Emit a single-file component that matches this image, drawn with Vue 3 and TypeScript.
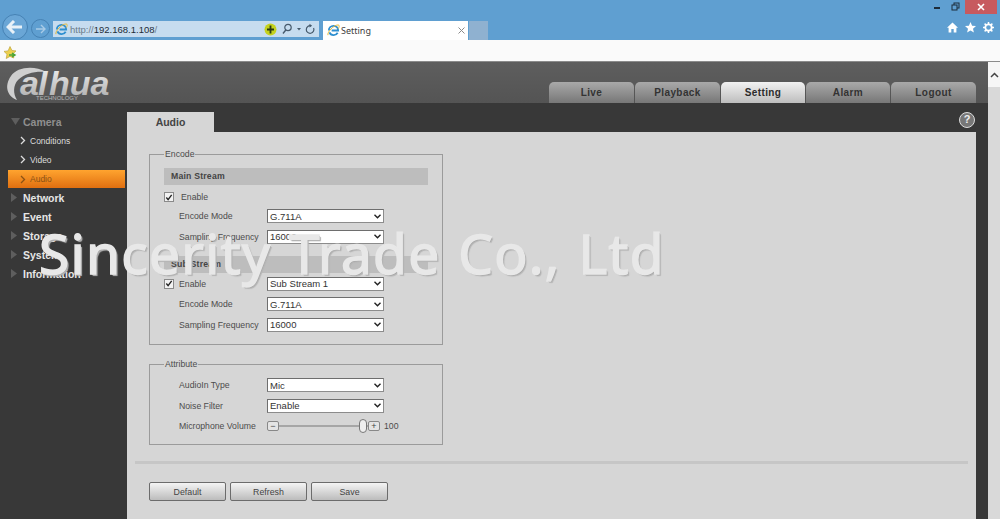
<script setup lang="ts">
const navTabs = [
  { label: 'Live', width: 85 },
  { label: 'Playback', width: 85 },
  { label: 'Setting', width: 84, active: true },
  { label: 'Alarm', width: 84 },
  { label: 'Logout', width: 85 },
];

const cameraItems = [
  { label: 'Conditions' },
  { label: 'Video' },
  { label: 'Audio', active: true },
];

const menuItems = ['Network', 'Event', 'Storage', 'System', 'Information'];

const streams = [
  {
    title: 'Main Stream',
    rows: [
      { label: 'Encode Mode', value: 'G.711A' },
      { label: 'Sampling Frequency', value: '16000' },
    ],
  },
  {
    title: 'Sub Stream',
    sub: true,
    rows: [
      { label: 'Encode Mode', value: 'G.711A' },
      { label: 'Sampling Frequency', value: '16000' },
    ],
  },
];

const attributes = [
  { label: 'AudioIn Type', value: 'Mic' },
  { label: 'Noise Filter', value: 'Enable' },
];

const buttons = ['Default', 'Refresh', 'Save'];
</script>

<template>
  <div class="page">
    <!-- browser chrome -->
    <div class="titlebar">
      <div class="window-btns">
        <svg class="win-icon" width="26" height="14" viewBox="0 0 26 14">
          <rect x="0" y="7" width="6" height="2" fill="#1d2c3a" />
          <rect x="20" y="3" width="5" height="5" fill="none" stroke="#1d2c3a" stroke-width="1" />
          <rect x="18" y="5" width="5" height="5" fill="#5f9fd1" stroke="#1d2c3a" stroke-width="1" />
        </svg>
        <div class="win-close">
          <svg width="8" height="8" viewBox="0 0 8 8"><path d="M1 1l6 6M7 1l-6 6" stroke="#fff" stroke-width="1.6" /></svg>
        </div>
      </div>
      <div class="toolbar">
        <div class="nav-btn back">
          <svg width="18" height="14" viewBox="0 0 18 14"><path d="M8 1L2 7l6 6M2 7h14" fill="none" stroke="#e8f1f8" stroke-width="3" /></svg>
        </div>
        <div class="nav-btn forward">
          <svg width="11" height="10" viewBox="0 0 11 10"><path d="M6 1l4 4-4 4M10 5H1" fill="none" stroke="#a9cbe6" stroke-width="1.4" /></svg>
        </div>
        <div class="address">
          <svg class="ie" width="13" height="13" viewBox="0 0 14 14">
            <path d="M2 7a5 5 0 0 1 10 0H5M11.5 9.5A5 5 0 0 1 2.6 9" fill="none" stroke="#2f8fd0" stroke-width="2" />
            <path d="M1 12C0 9 7 1 12 1c2 0 1 3 0 4" fill="none" stroke="#e8b92c" stroke-width="1" />
          </svg>
          <span class="url"><i>http://</i>192.168.1.108<i>/</i></span>
          <svg class="guard" width="13" height="13" viewBox="0 0 13 13">
            <circle cx="6.5" cy="6.5" r="6" fill="#c4d21f" />
            <path d="M6.5 2.5v8M3 6.5h7" stroke="#2c3a12" stroke-width="1.8" />
          </svg>
          <svg class="addr-tools" width="38" height="12" viewBox="0 0 38 12">
            <circle cx="7" cy="4.5" r="3.2" fill="none" stroke="#465a6c" stroke-width="1.2" />
            <path d="M4.8 7L2 10.5" stroke="#465a6c" stroke-width="1.4" />
            <path d="M16 5h4l-2 2.4z" fill="#465a6c" />
            <path d="M30 2.800a3.800 3.800 0 1 0 2.600 2.200" fill="none" stroke="#465a6c" stroke-width="1.2" />
            <path d="M28.500 .8l2.600 2-2.600 1.600z" fill="#465a6c" />
          </svg>
        </div>
        <div class="browser-tab">
          <svg class="ie" width="13" height="13" viewBox="0 0 14 14">
            <path d="M2 7a5 5 0 0 1 10 0H5M11.5 9.5A5 5 0 0 1 2.6 9" fill="none" stroke="#2f8fd0" stroke-width="2" />
            <path d="M1 12C0 9 7 1 12 1c2 0 1 3 0 4" fill="none" stroke="#e8b92c" stroke-width="1" />
          </svg>
          <span class="tab-title">Setting</span>
          <svg width="7" height="7" viewBox="0 0 7 7"><path d="M.5.5l6 6M6.5.5l-6 6" stroke="#8a8a8a" stroke-width="1" /></svg>
        </div>
        <div class="new-tab"></div>
        <div class="tool-icons">
          <svg width="11" height="11" viewBox="0 0 11 11"><path d="M5.500 .5L11 5.800H9.400V10.500H6.700V7H4.300V10.500H1.600V5.800H0z" fill="#fff" /></svg>
          <svg width="11" height="11" viewBox="0 0 11 11"><path d="M5.500 0l1.600 3.700 3.900.4-3 2.600.9 3.900-3.400-2-3.400 2 .9-3.900-3-2.600 3.900-.4z" fill="#fff" /></svg>
          <svg width="11" height="11" viewBox="0 0 11 11">
            <circle cx="5.500" cy="5.500" r="3.200" fill="none" stroke="#fff" stroke-width="1.800" />
            <path d="M5.500 0v2M5.500 9v2M0 5.500h2M9 5.500h2M1.600 1.600l1.400 1.400M8 8l1.400 1.400M9.400 1.600L8 3M3 8L1.600 9.400" stroke="#fff" stroke-width="1.500" />
          </svg>
        </div>
      </div>
    </div>
    <div class="favbar">
      <svg width="14" height="13" viewBox="0 0 14 13">
        <path d="M7 .5l1.900 3.900 4.100.5-3 2.900.8 4.200L7 10.400l-3.800 2.100.8-4.200-3-2.900 4.100-.5z" fill="#edd04e" stroke="#b79a2a" stroke-width=".6" />
        <path d="M6 9h5M9 7l3 2-3 2" fill="none" stroke="#4aa538" stroke-width="1.500" />
      </svg>
    </div>

    <!-- device web ui -->
    <div class="viewport">
      <div class="app">
        <header class="header">
          <svg class="logo" width="112" height="41" viewBox="0 0 112 41">
            <defs>
              <linearGradient id="logoFill" x1="0" y1="0" x2="0" y2="1">
                <stop offset="0" stop-color="#f4f4f4" />
                <stop offset="1" stop-color="#a8a8a8" />
              </linearGradient>
            </defs>
            <path d="M42 10C30 3 13 5 7 14 0 24 3 34 13 38 9 32 9 23 14 18 21 11 32 9 42 10z" fill="#cfcfcf" />
            <text x="16" y="33" class="logo-text" fill="url(#logoFill)">a</text>
            <text x="34" y="33" class="logo-text" fill="url(#logoFill)">l</text>
            <text x="45" y="33" class="logo-text" fill="url(#logoFill)">hua</text>
            <text x="32" y="37.500" class="logo-sub">TECHNOLOGY</text>
          </svg>
          <nav class="nav-tabs">
            <div
              v-for="tab in navTabs"
              :key="tab.label"
              class="nav-tab"
              :class="{ active: tab.active }"
              :style="{ width: tab.width + 'px' }"
            >{{ tab.label }}</div>
          </nav>
        </header>

        <div class="body">
          <aside class="sidebar">
            <div class="menu-row dim">
              <svg class="caret-down" width="9" height="7" viewBox="0 0 9 7"><path d="M0 0h9L4.500 7z" fill="#5e5e5e" /></svg>
              <span>Camera</span>
            </div>
            <div
              v-for="item in cameraItems"
              :key="item.label"
              class="sub-row"
              :class="{ active: item.active }"
            >
              <svg width="6" height="9" viewBox="0 0 6 9"><path d="M1 1l3.500 3.500L1 8" fill="none" stroke="currentColor" stroke-width="1.300" /></svg>
              <span>{{ item.label }}</span>
            </div>
            <div v-for="item in menuItems" :key="item" class="menu-row">
              <svg class="caret" width="6" height="9" viewBox="0 0 6 9"><path d="M0 0l6 4.500L0 9z" fill="#5e5e5e" /></svg>
              <span>{{ item }}</span>
            </div>
          </aside>

          <main class="main">
            <div class="tabstrip">
              <div class="page-tab">Audio</div>
              <div class="help">?</div>
            </div>
            <div class="panel">
              <fieldset class="group encode">
                <legend>Encode</legend>
                <section v-for="stream in streams" :key="stream.title" class="stream">
                  <div class="stream-title">{{ stream.title }}</div>
                  <div class="row enable" :class="{ sub: stream.sub }">
                    <span class="check">
                      <svg width="9" height="9" viewBox="0 0 9 9"><path d="M1.500 4.500l2 2.500 4-5.500" fill="none" stroke="#222" stroke-width="1.500" /></svg>
                    </span>
                    <span class="enable-label">Enable</span>
                    <div v-if="stream.sub" class="select enable-select">
                      <span>Sub Stream 1</span>
                      <svg width="7" height="5" viewBox="0 0 7 5"><path d="M.5 .8l3 3 3-3" fill="none" stroke="#222" stroke-width="1.400" /></svg>
                    </div>
                  </div>
                  <div v-for="row in stream.rows" :key="row.label" class="row">
                    <label>{{ row.label }}</label>
                    <div class="select">
                      <span>{{ row.value }}</span>
                      <svg width="7" height="5" viewBox="0 0 7 5"><path d="M.5 .8l3 3 3-3" fill="none" stroke="#222" stroke-width="1.400" /></svg>
                    </div>
                  </div>
                </section>
              </fieldset>

              <fieldset class="group attribute">
                <legend>Attribute</legend>
                <div v-for="row in attributes" :key="row.label" class="row">
                  <label>{{ row.label }}</label>
                  <div class="select">
                    <span>{{ row.value }}</span>
                    <svg width="7" height="5" viewBox="0 0 7 5"><path d="M.5 .8l3 3 3-3" fill="none" stroke="#222" stroke-width="1.400" /></svg>
                  </div>
                </div>
                <div class="row">
                  <label>Microphone Volume</label>
                  <div class="slider">
                    <span class="step">&minus;</span>
                    <span class="track"><span class="thumb"></span></span>
                    <span class="step">+</span>
                    <span class="volume">100</span>
                  </div>
                </div>
              </fieldset>

              <div class="divider"></div>

              <div class="actions">
                <button v-for="b in buttons" :key="b" type="button">{{ b }}</button>
              </div>
            </div>
          </main>
        </div>
      </div>

      <div class="scrollbar">
        <div class="scroll-up">
          <svg width="9" height="6" viewBox="0 0 9 6"><path d="M1 5l3.500-3.500L8 5" fill="none" stroke="#444" stroke-width="1.500" /></svg>
        </div>
        <div class="scroll-thumb"></div>
      </div>
    </div>

    <div class="watermark">Sincerity Trade Co., Ltd</div>
  </div>
</template>

<style scoped>
.page {
  position: relative;
  width: 1000px;
  height: 519px;
  overflow: hidden;
  display: flex;
  flex-direction: column;
  font-family: "Liberation Sans", Arial, sans-serif;
  background: #3a3a3a;
}

/* browser chrome */
.titlebar {
  height: 40px;
  background: #5f9fd1;
  position: relative;
  flex: none;
}
.window-btns {
  position: absolute;
  top: 0;
  right: 3px;
  display: flex;
  gap: 5px;
}
.win-close {
  width: 32px;
  height: 14px;
  background: #c75a5f;
  display: flex;
  align-items: center;
  justify-content: center;
}
.toolbar {
  display: flex;
  align-items: flex-end;
  height: 40px;
  padding-left: 2px;
}
.nav-btn {
  border-radius: 50%;
  display: flex;
  align-items: center;
  justify-content: center;
  border: 1px solid #4682b4;
  box-sizing: border-box;
  flex: none;
}
.back {
  width: 26px;
  height: 26px;
  background: #6aa6d6;
}
.forward {
  width: 19px;
  height: 19px;
  margin: 0 3px 2px 3px;
}
.address {
  width: 266px;
  height: 16px;
  margin-bottom: 3px;
  background: #c6dcef;
  display: flex;
  align-items: center;
  padding: 0 0 0 2px;
  box-sizing: border-box;
  flex: none;
}
.url {
  font-size: 9.500px;
  color: #1f2c38;
  margin-left: 2px;
  flex: 1;
}
.url i {
  font-style: normal;
  color: #6d7d8b;
}
.guard {
  margin-right: 4px;
}
.browser-tab {
  width: 145px;
  height: 19px;
  margin-left: 4px;
  background: #fff;
  display: flex;
  align-items: center;
  padding: 0 3px 0 4px;
  box-sizing: border-box;
  flex: none;
}
.tab-title {
  font-family: "Noto Sans", sans-serif;
  font-size: 9px;
  color: #3c3c3c;
  margin-left: 1px;
  flex: 1;
}
.new-tab {
  width: 19px;
  height: 19px;
  margin-left: 1px;
  background: #8fb1d0;
  flex: none;
}
.tool-icons {
  margin-left: auto;
  display: flex;
  gap: 7px;
  padding: 0 6px 7px 0;
}
.favbar {
  background: #fafafa;
  border-bottom: 1px solid #8b8b8b;
  padding: 5px 0 0 3px;
  height: 16px;
  flex: none;
}
.viewport {
  flex: 1;
  display: flex;
  min-height: 0;
}
.app {
  width: 988px;
  display: flex;
  flex-direction: column;
  flex: none;
}

/* header */
.header {
  height: 41px;
  background: linear-gradient(#5e5e5e, #545454);
  display: flex;
  align-items: flex-end;
  justify-content: space-between;
  padding-right: 12px;
  flex: none;
}
.logo {
  margin: 0 0 0 4px;
  align-self: flex-start;
}
.logo-text {
  font-family: "Liberation Sans", sans-serif;
  font-weight: 700;
  font-style: italic;
  font-size: 34px;
}
.logo-sub {
  font-family: "Liberation Sans", sans-serif;
  font-size: 6px;
  fill: #b5b5b5;
}
.nav-tabs {
  display: flex;
  gap: 1px;
}
.nav-tab {
  height: 21px;
  border-radius: 5px 5px 0 0;
  background: linear-gradient(#a9a9a9, #777);
  text-align: center;
  line-height: 21px;
  font-size: 10px;
  font-weight: 700;
  letter-spacing: 0.4px;
  color: #333;
}
.nav-tab.active {
  background: linear-gradient(#f2f2f2, #bdbdbd);
  color: #2c2c2c;
}

/* sidebar */
.body {
  flex: 1;
  display: flex;
  background: #383838;
  min-height: 0;
}
.sidebar {
  width: 127px;
  flex: none;
  padding-top: 9px;
  box-sizing: border-box;
}
.menu-row {
  height: 19px;
  display: flex;
  align-items: center;
  padding-left: 11px;
  font-size: 10.500px;
  font-weight: 700;
  color: #e6e6e6;
}
.menu-row .caret {
  margin-right: 6px;
}
.menu-row .caret-down {
  margin-right: 3px;
}
.menu-row.dim {
  color: #8f8f8f;
}
.sub-row {
  height: 19px;
  display: flex;
  align-items: center;
  gap: 4px;
  padding-left: 20px;
  font-size: 8.500px;
  color: #ddd;
}
.sub-row.active {
  margin: 1px 2px 0 8px;
  padding-left: 12px;
  height: 18px;
  background: linear-gradient(#ffa42f, #e06f10);
  color: #8a5214;
}

/* main */
.main {
  flex: 1;
  display: flex;
  flex-direction: column;
  min-width: 0;
}
.tabstrip {
  height: 29px;
  padding: 9px 13px 0 0;
  box-sizing: border-box;
  display: flex;
  align-items: flex-end;
  justify-content: space-between;
  flex: none;
}
.page-tab {
  width: 87px;
  height: 20px;
  background: #d6d6d6;
  text-align: center;
  line-height: 20px;
  font-size: 10.500px;
  font-weight: 700;
  color: #444;
}
.help {
  width: 16px;
  height: 16px;
  margin-bottom: 4px;
  border: 1.500px solid #ddd;
  border-radius: 50%;
  box-sizing: border-box;
  background: #777;
  color: #eee;
  font-size: 11px;
  font-weight: 700;
  line-height: 13px;
  text-align: center;
}
.panel {
  flex: 1;
  width: 849px;
  background: #d6d6d6;
  padding: 16px 0 0 22px;
  box-sizing: border-box;
}

/* groups */
.group {
  width: 294px;
  box-sizing: border-box;
  margin: 0;
  border: 1px solid #9b9b9b;
  padding: 0 14px;
}
.group legend {
  margin-left: 0;
  padding: 0 1px;
  font-size: 8.700px;
  line-height: 12px;
  color: #4c4c4c;
}
.encode {
  height: 197px;
}
.attribute {
  height: 87px;
  margin-top: 13px;
  padding-top: 5px;
}
.stream-title {
  height: 17px;
  margin-top: 8px;
  background: #bdbdbd;
  padding-left: 7px;
  line-height: 17px;
  font-size: 8.700px;
  font-weight: 700;
  letter-spacing: 0.2px;
  color: #444;
}
.stream + .stream .stream-title {
  margin-top: 9px;
}
.row {
  height: 20.500px;
  display: flex;
  align-items: center;
  padding-left: 15px;
  font-size: 8.700px;
  color: #4c4c4c;
}
.row label {
  width: 88px;
  flex: none;
  white-space: nowrap;
}
.row.enable {
  height: 18px;
  margin-top: 3px;
  padding-left: 0;
}
.row.enable.sub {
  height: 21px;
  margin-top: 0;
}
.enable-label {
  margin-left: 7px;
  width: 86px;
}
.enable.sub .enable-label {
  margin-left: 5px;
  width: 88px;
}
.check {
  width: 10px;
  height: 10px;
  border: 1px solid #8a8a8a;
  background: #f2f2f2;
  box-sizing: border-box;
  display: flex;
  align-items: center;
  justify-content: center;
  flex: none;
}
.select {
  width: 117px;
  height: 14px;
  background: #fff;
  border: 1px solid #8c8c8c;
  border-left-color: #6e6e6e;
  border-top-color: #6e6e6e;
  box-sizing: border-box;
  display: flex;
  align-items: center;
  justify-content: space-between;
  padding: 0 2px;
  font-size: 9.500px;
  color: #333;
  flex: none;
}
.slider {
  display: flex;
  align-items: center;
  width: 140px;
  flex: none;
}
.step {
  width: 12px;
  height: 10px;
  border: 1px solid #888;
  border-radius: 2px;
  background: #e4e4e4;
  box-sizing: border-box;
  display: flex;
  align-items: center;
  justify-content: center;
  font-size: 9px;
  line-height: 1;
  color: #444;
  flex: none;
}
.track {
  position: relative;
  width: 89px;
  height: 2px;
  background: #a6a6a6;
  flex: none;
}
.thumb {
  position: absolute;
  left: 80px;
  top: -6px;
  width: 8px;
  height: 14px;
  border: 1px solid #777;
  border-radius: 4px;
  background: #eee;
  box-sizing: border-box;
}
.volume {
  margin-left: 4px;
  font-size: 8.700px;
}
.divider {
  height: 3px;
  width: 833px;
  margin: 16px 0 0 -14px;
  background: #c6c6c6;
}
.actions {
  display: flex;
  gap: 4px;
  margin-top: 18px;
}
.actions button {
  width: 77px;
  height: 19px;
  padding: 0;
  border: 1px solid #6c6c6c;
  border-radius: 2px;
  background: linear-gradient(#f4f4f4, #bcbcbc);
  font-family: inherit;
  font-size: 8.800px;
  color: #444;
}

/* scrollbar */
.scrollbar {
  flex: 1;
  background: #dcdcdc;
  display: flex;
  flex-direction: column;
}
.scroll-up {
  height: 25px;
  background: #f6f6f6;
  display: flex;
  justify-content: center;
  padding-top: 10px;
  box-sizing: border-box;
}
.scroll-thumb {
  flex: 1;
  background: #d9d9d9;
}

/* overlay stamped across the shot */
.watermark {
  position: absolute;
  left: 39px;
  top: 215px;
  font-family: "Noto Sans", sans-serif;
  font-size: 55px;
  line-height: 76px;
  letter-spacing: 1.300px;
  word-spacing: 2px;
  white-space: nowrap;
  color: #e8e8e8;
  -webkit-text-stroke: 1.500px #e8e8e8;
  text-shadow: 1px 1px 0 #a5a5a5, 2px 2px 1px #b5b5b5;
}
</style>

<style>
html, body {
  margin: 0;
  background: #3a3a3a;
}
</style>
